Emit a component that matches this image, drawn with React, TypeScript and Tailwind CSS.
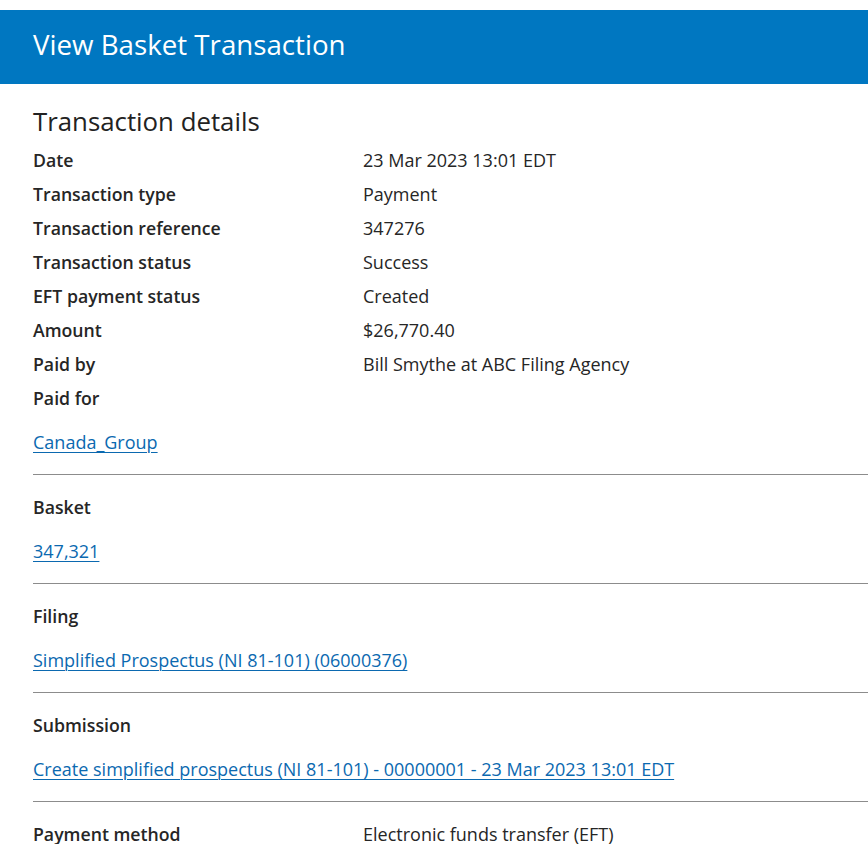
const rows: { label: string; value?: string }[] = [
  { label: "Date", value: "23 Mar 2023 13:01 EDT" },
  { label: "Transaction type", value: "Payment" },
  { label: "Transaction reference", value: "347276" },
  { label: "Transaction status", value: "Success" },
  { label: "EFT payment status", value: "Created" },
  { label: "Amount", value: "$26,770.40" },
  { label: "Paid by", value: "Bill Smythe at ABC Filing Agency" },
  { label: "Paid for" },
];

const sections = [
  { label: "Basket", link: "347,321" },
  { label: "Filing", link: "Simplified Prospectus (NI 81-101) (06000376)" },
  {
    label: "Submission",
    link: "Create simplified prospectus (NI 81-101) - 00000001 - 23 Mar 2023 13:01 EDT",
  },
];

function Row({ label, value }: { label: string; value?: string }) {
  return (
    <div className="flex h-[34px] items-center">
      <div className="w-[330px] shrink-0 text-[17.7px] font-semibold">{label}</div>
      {value && <div>{value}</div>}
    </div>
  );
}

function LinkText({ children }: { children: string }) {
  return (
    <a href="#" className="text-[#0b69b0] underline underline-offset-[3px] decoration-1">
      {children}
    </a>
  );
}

export default function App() {
  return (
    <div
      className="min-h-screen bg-white pt-[10px] text-[18px] text-[#262626]"
      style={{ fontFamily: '"Open Sans", "Noto Sans", sans-serif' }}
    >
      <header className="flex h-[74px] items-center bg-[#0077c1] px-[33px] pb-[4px]">
        <h1 className="text-[27.7px] text-white">View Basket Transaction</h1>
      </header>

      <main className="pl-[33px]">
        <h2 className="mt-[20px] mb-[5px] text-[25.8px] leading-[34px] text-[#222]">
          Transaction details
        </h2>

        {rows.map((r) => (
          <Row key={r.label} label={r.label} value={r.value} />
        ))}

        <div className="mt-[10px] mb-[15px] flex h-[34px] items-center">
          <LinkText>Canada_Group</LinkText>
        </div>

        {sections.map((s) => (
          <div key={s.label} className="border-t border-[#8c8c8c] pt-[15px] pb-[15px]">
            <div className="flex h-[34px] items-center text-[17.7px] font-semibold">{s.label}</div>
            <div className="mt-[10px] flex h-[34px] items-center">
              <LinkText>{s.link}</LinkText>
            </div>
          </div>
        ))}

        <div className="border-t border-[#8c8c8c] pt-[15px]">
          <Row label="Payment method" value="Electronic funds transfer (EFT)" />
        </div>
      </main>
    </div>
  );
}
